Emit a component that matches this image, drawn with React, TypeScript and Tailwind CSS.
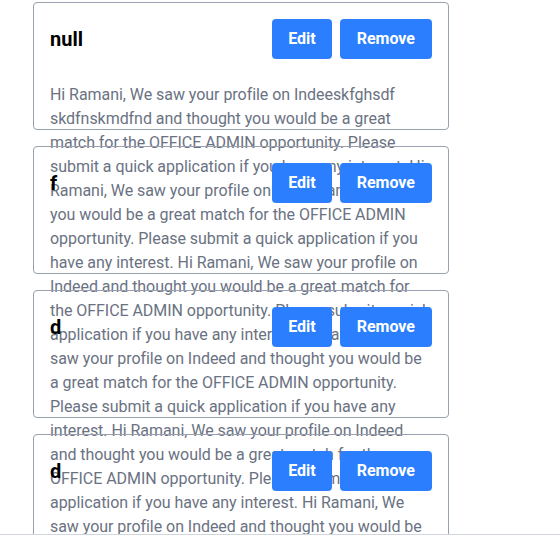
const repeat =
  "Hi Ramani, We saw your profile on Indeed and thought you would be a great match for the OFFICE ADMIN opportunity. Please submit a quick application if you have any interest. "

const notes = [
  {
    title: "null",
    body:
      "Hi Ramani, We saw your profile on Indeeskfghsdf skdfnskmdfnd and thought you would be a great match for the OFFICE ADMIN opportunity. Please submit a quick application if you have any interest. " +
      repeat.repeat(6),
  },
  { title: "f", body: "" },
  { title: "d", body: "" },
  { title: "d", body: "" },
]

export default function App() {
  return (
    <div className="w-full h-[535px] overflow-hidden border-b border-gray-300 bg-white font-['Roboto',sans-serif]">
      <div className="flex flex-col gap-4 pt-[2px] pl-[33px]">
        {notes.map((note, index) => (
          <div key={index} className="w-[416px] h-32 border border-gray-400 rounded p-4">
            <div className="flex justify-between items-center">
              <h2 className="text-xl font-bold text-black leading-[30px]">{note.title}</h2>
              <div className="flex gap-2">
                <button className="px-4 py-2 rounded bg-blue-500 text-white font-bold">Edit</button>
                <button className="px-[17px] py-2 rounded bg-blue-500 text-white font-bold">Remove</button>
              </div>
            </div>
            {note.body && <p className="mt-6 text-gray-500 leading-6 tracking-[-0.05px]">{note.body}</p>}
          </div>
        ))}
      </div>
    </div>
  )
}
